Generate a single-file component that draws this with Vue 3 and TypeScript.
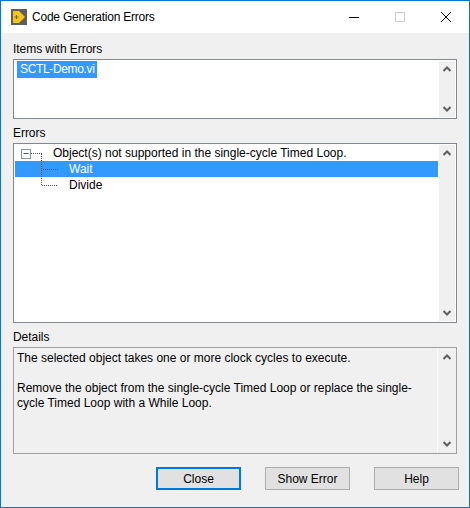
<script setup lang="ts">
interface Row { label: string; selected?: boolean }
const rows: Row[] = [
  { label: 'Wait', selected: true },
  { label: 'Divide' },
]
const buttons = ['Close', 'Show Error', 'Help']
</script>

<template>
  <div class="window">
    <header class="titlebar">
      <svg class="app-icon" width="16" height="16" viewBox="0 0 16 16">
        <rect width="16" height="16" fill="#5e5e5e" />
        <path d="M2 2h6l6 6-6 6H2z" fill="#f5c518" />
        <path d="M3.500 8h4M5.500 6v4" stroke="#7a6414" stroke-width="1" fill="none" />
      </svg>
      <span class="title">Code Generation Errors</span>
      <div class="controls">
        <span class="ctl"><svg width="12" height="12" viewBox="0 0 12 12"><path d="M1 6.500h10" stroke="#000" /></svg></span>
        <span class="ctl"><svg width="12" height="12" viewBox="0 0 12 12"><rect x="1.500" y="1.500" width="9" height="9" fill="none" stroke="#ccc" /></svg></span>
        <span class="ctl"><svg width="12" height="12" viewBox="0 0 12 12"><path d="M1 1l10 10M11 1L1 11" stroke="#000" /></svg></span>
      </div>
    </header>

    <main class="body">
      <label class="label first">Items with Errors</label>
      <section class="box items">
        <div class="content"><span class="sel-text">SCTL-Demo.vi</span></div>
        <div class="scrollbar">
          <svg width="8" height="6" viewBox="0 0 8 6"><path d="M0.500 5L4 1.500 7.500 5" fill="none" stroke="#606060" stroke-width="2" /></svg>
          <svg width="8" height="6" viewBox="0 0 8 6"><path d="M0.500 1L4 4.500 7.500 1" fill="none" stroke="#606060" stroke-width="2" /></svg>
        </div>
      </section>

      <label class="label">Errors</label>
      <section class="box errors">
        <div class="content tree">
          <svg class="connectors" width="44" height="48" viewBox="0 0 44 48">
            <path d="M16 8.500h11M26.500 9v32M28 24.500h15M27 40.500h16" stroke="#555" stroke-dasharray="1 1" fill="none" />
            <rect x="6.500" y="4.500" width="9" height="9" fill="#fff" stroke="#8a93a5" />
            <path d="M8.500 8.500h5" stroke="#46505f" />
          </svg>
          <div class="row root">Object(s) not supported in the single-cycle Timed Loop.</div>
          <div v-for="r in rows" :key="r.label" class="row child" :class="{ selected: r.selected }">{{ r.label }}</div>
        </div>
        <div class="scrollbar">
          <svg width="8" height="6" viewBox="0 0 8 6"><path d="M0.500 5L4 1.500 7.500 5" fill="none" stroke="#606060" stroke-width="2" /></svg>
          <svg width="8" height="6" viewBox="0 0 8 6"><path d="M0.500 1L4 4.500 7.500 1" fill="none" stroke="#606060" stroke-width="2" /></svg>
        </div>
      </section>

      <label class="label">Details</label>
      <section class="box details">
        <div class="content text">
          <p>The selected object takes one or more clock cycles to execute.</p>
          <p>Remove the object from the single-cycle Timed Loop or replace the single-cycle Timed Loop with a While Loop.</p>
        </div>
        <div class="scrollbar">
          <svg width="8" height="6" viewBox="0 0 8 6"><path d="M0.500 5L4 1.500 7.500 5" fill="none" stroke="#606060" stroke-width="2" /></svg>
          <svg width="8" height="6" viewBox="0 0 8 6"><path d="M0.500 1L4 4.500 7.500 1" fill="none" stroke="#606060" stroke-width="2" /></svg>
        </div>
      </section>

      <footer class="footer">
        <button v-for="(b, i) in buttons" :key="b" class="btn" :class="{ primary: i === 0 }">{{ b }}</button>
      </footer>
    </main>
  </div>
</template>

<style>
html, body { margin: 0; padding: 0; background: #f0f0f0; }
</style>

<style scoped>
.window {
  box-sizing: border-box;
  width: 470px;
  height: 508px;
  display: flex;
  flex-direction: column;
  background: #f0f0f0;
  border: 1px solid #0078d7;
  font-family: "Liberation Sans", Arial, sans-serif;
  font-size: 12px;
  color: #000;
}
.titlebar {
  height: 32px;
  flex: none;
  display: flex;
  align-items: center;
  background: #fff;
  padding-left: 10px;
}
.app-icon { flex: none; margin-top: -1px; }
.title { margin-left: 5px; letter-spacing: -0.22px; }
.controls { margin-left: auto; display: flex; }
.ctl {
  width: 46px;
  height: 32px;
  display: flex;
  align-items: center;
  justify-content: center;
}
.body {
  flex: 1;
  display: flex;
  flex-direction: column;
  padding: 0 10px 0 12px;
}
.label { height: 16px; line-height: 16px; margin: 6px 0 2px; letter-spacing: -0.05px; }
.label.first { margin-top: 8px; }
.box {
  box-sizing: border-box;
  width: 444px;
  display: flex;
  border: 1px solid #828790;
  background: #fff;
  padding: 1px;
}
.items { height: 60px; }
.errors { height: 180px; }
.details { height: 107px; background: #f0f0f0; border-color: #a0a0a0; }
.content { flex: 1; min-width: 0; position: relative; }
.sel-text {
  display: inline-block;
  background: #3399ff;
  color: #fff;
  padding: 0 3px 1px 3px;
  margin-left: 2px;
  line-height: 16px;
  letter-spacing: -0.35px;
}
.connectors { position: absolute; left: 0; top: 0; z-index: 1; }
.row { height: 16px; line-height: 16px; }
.row.root { padding-left: 38px; }
.row.child { padding-left: 54px; }
.row.selected { background: #3399ff; color: #fff; }
.text { padding: 2px 18px 0 2px; line-height: 15.500px; }
.text p { margin: 0 0 14px; }
.scrollbar {
  flex: none;
  width: 16px;
  margin-left: 1px;
  background: #f0f0f0;
  display: flex;
  flex-direction: column;
  align-items: center;
  justify-content: space-between;
  padding: 5px 0;
  box-sizing: border-box;
}
.details .scrollbar { border-left: 1px solid #fff; width: 18px; margin-left: 0; }
.footer {
  margin-top: 13px;
  display: flex;
  justify-content: flex-end;
  gap: 24px;
}
.btn {
  box-sizing: border-box;
  width: 85px;
  height: 23px;
  padding: 0;
  background: #e1e1e1;
  border: 1px solid #adadad;
  font: inherit;
  color: #000;
}
.btn.primary { border: 2px solid #0078d7; }
</style>
